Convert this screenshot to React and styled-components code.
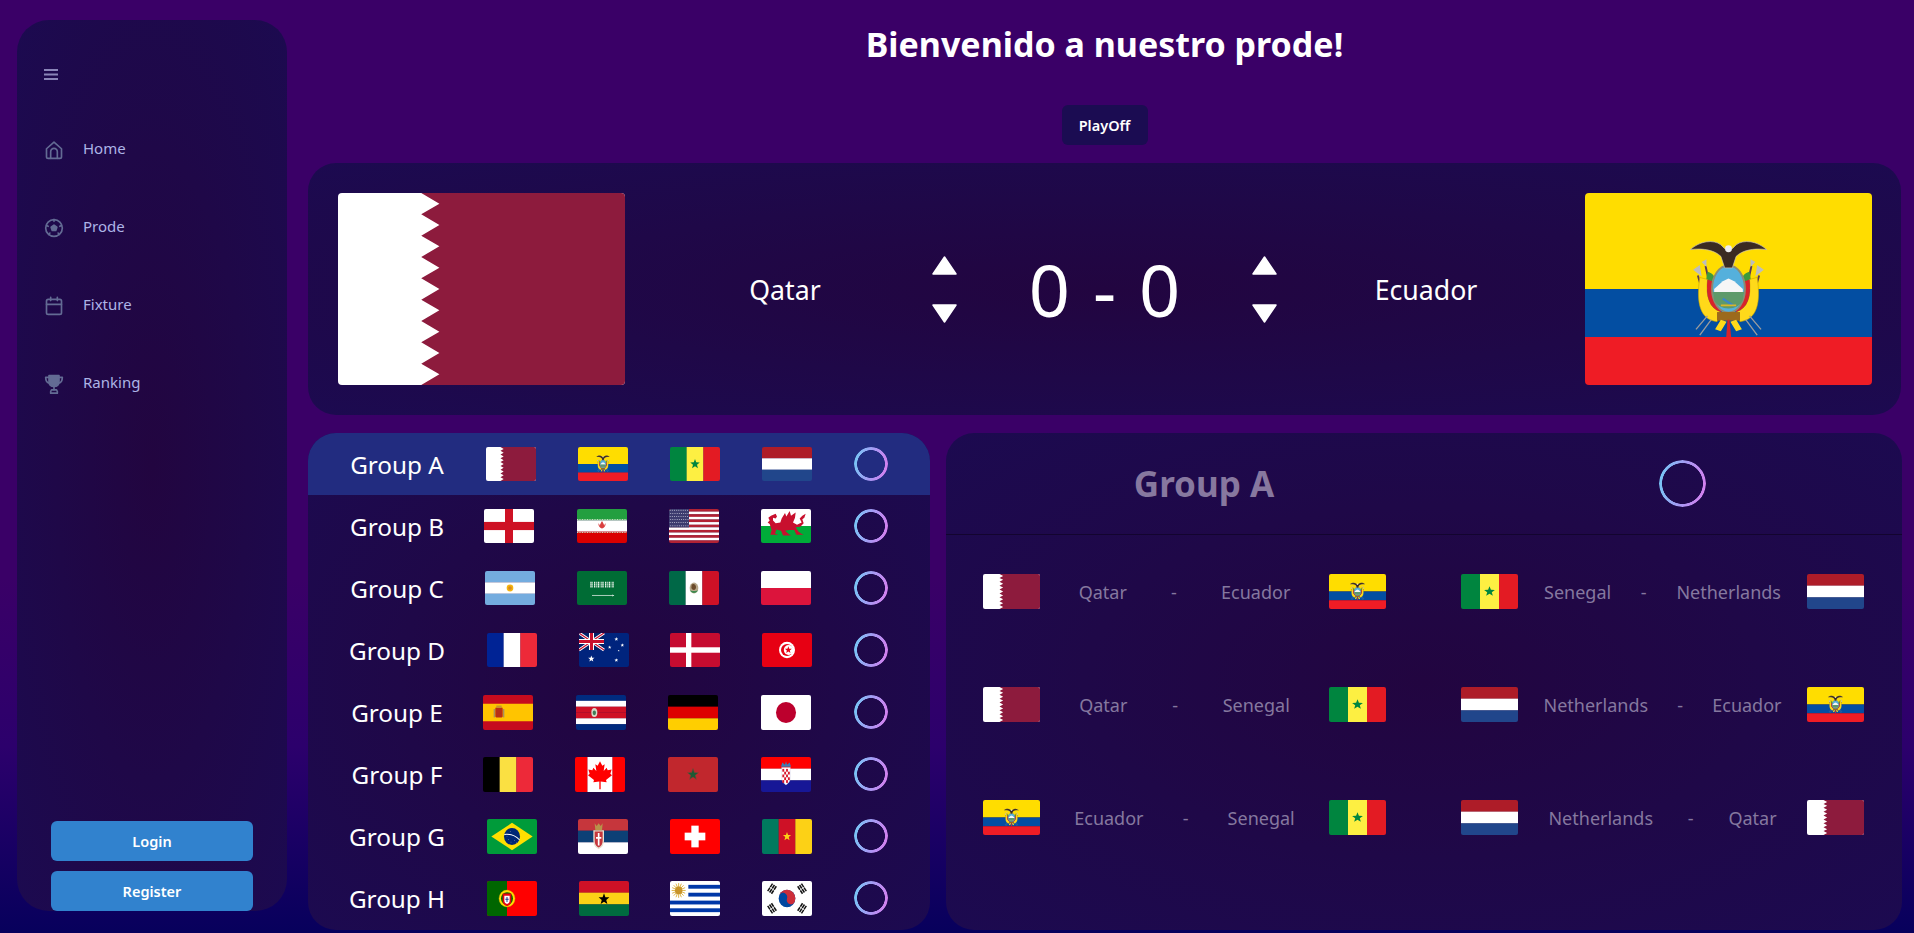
import React from "react";
import styled, { createGlobalStyle } from "styled-components";

const Global = createGlobalStyle`
  html, body { margin: 0; padding: 0; height: 933px; overflow: hidden; }
  body {
    font-family: "Noto Sans", "Open Sans", sans-serif;
    color: #fff;
    background: linear-gradient(180deg, #3a0067 0%, #3a0067 62%, #2c006c 80%, #07005c 100%);
  }
  * { box-sizing: border-box; }
`;

const panelBg = `radial-gradient(ellipse at 50% 50%, #220540 0%, #1f0848 50%, #1c0a50 100%)`;

const Page = styled.div`
  display: flex;
  width: 1914px;
  height: 933px;
  padding: 20px 13px 0 17px;
  gap: 21px;
`;
const Sidebar = styled.aside`
  display: flex;
  flex-direction: column;
  flex: 0 0 270px;
  height: 891px;
  border-radius: 32px;
  background: ${panelBg};
  padding-top: 49px;
`;
const MenuButton = styled.svg`
  display: block;
  width: 14px;
  height: 11px;
  margin-left: 27px;
  margin-bottom: 29px;
  color: #8a85b8;
`;
const NavList = styled.nav`
  display: flex;
  flex-direction: column;
`;
const NavItem = styled.a`
  display: flex;
  align-items: center;
  gap: 19px;
  height: 78px;
  padding-left: 27px;
  font-size: 15px;
  color: #adb4e6;
`;
const NavIcon = styled.svg`
  width: 20px;
  height: 20px;
  margin-top: 4px;
  color: #636b94;
  flex: none;
`;
const AuthBox = styled.div`
  display: flex;
  flex-direction: column;
  gap: 10px;
  margin-top: auto;
  padding: 0 34px;
`;
const AuthButton = styled.button`
  height: 40px;
  border: 0;
  border-radius: 6px;
  background: #3182ce;
  color: #fff;
  font: 600 14.5px "Noto Sans", sans-serif;
`;
const Main = styled.main`
  display: flex;
  flex-direction: column;
  flex: 1;
  min-width: 0;
`;
const Title = styled.h1`
  margin: 0;
  height: 48px;
  text-align: center;
  font-size: 34px;
  line-height: 48px;
  font-weight: 700;
`;
const PlayOff = styled.button`
  align-self: center;
  width: 86px;
  height: 40px;
  margin-top: 37px;
  margin-bottom: 18px;
  border: 0;
  border-radius: 6px;
  background: #1b0c52;
  color: #fff;
  font: 600 14.5px "Noto Sans", sans-serif;
`;
const MatchPanel = styled.section`
  display: grid;
  grid-template-columns: 287px 307px 25px 295px 25px 308px 287px;
  align-items: center;
  height: 252px;
  padding: 0 30px;
  border-radius: 28px;
  background: ${panelBg};
  margin-bottom: 18px;
`;
const BigName = styled.div`
  text-align: center;
  font-size: 26.7px;
  font-weight: 400;
  padding: ${p => (p.$right ? "0 10px 0 0" : "0 0 0 13px")};
`;
const Stepper = styled.div`
  display: flex;
  flex-direction: column;
  gap: 29px;
`;
const Arrow = styled.svg`
  display: block;
  width: 25px;
  height: 19px;
  fill: #fff;
`;
const Score = styled.div`
  display: flex;
  justify-content: center;
  align-items: center;
  font-size: 72px;
  line-height: 1;
  font-weight: 400;
  gap: 23px;
`;
const Lower = styled.div`
  display: flex;
  gap: 16px;
`;
const Groups = styled.section`
  flex: 0 0 622px;
  height: 497px;
  border-radius: 28px;
  overflow: hidden;
  background: ${panelBg};
`;
const GroupRow = styled.div`
  display: flex;
  align-items: center;
  height: 62px;
  background: ${p => (p.$active ? "#222c80" : "transparent")};
`;
const GroupName = styled.div`
  flex: 0 0 175px;
  padding: 1px 0 0 3px;
  text-align: center;
  font-size: 24.3px;
`;
const FlagSlot = styled.div`
  flex: 0 0 92px;
  padding-left: ${p => p.$offset}px;
`;
const FlagSvg = styled.svg`
  display: block;
  width: ${p => p.$w}px;
  height: ${p => p.$h}px;
  border-radius: ${p => p.$r}px;
  flex: none;
`;
const Ring = styled.div`
  flex: none;
  width: ${p => p.$size}px;
  height: ${p => p.$size}px;
  margin-left: ${p => p.$ml || 0}px;
  border-radius: 50%;
  background: linear-gradient(100deg, #70cdf6, #a69af4 50%, #dc7cee);
  -webkit-mask: radial-gradient(farthest-side, transparent calc(100% - 3.4px), #000 calc(100% - 2.8px));
  mask: radial-gradient(farthest-side, transparent calc(100% - 3.4px), #000 calc(100% - 2.8px));
`;
const Detail = styled.section`
  flex: 1;
  height: 497px;
  border-radius: 28px;
  background: ${panelBg};
`;
const DetailHead = styled.header`
  display: grid;
  grid-template-columns: 516px 440px;
  align-items: center;
  justify-items: center;
  height: 102px;
  border-bottom: 1px solid #13042f;
`;
const DetailName = styled.div`
  font-size: 35px;
  font-weight: 700;
  color: #87789f;
`;
const MatchGrid = styled.div`
  display: grid;
  grid-template-columns: 403px 403px;
  column-gap: 75px;
  row-gap: 78px;
  padding: 39px 0 0 37px;
`;
const MatchRow = styled.div`
  display: flex;
  align-items: center;
`;
const Teams = styled.div`
  display: flex;
  flex: 1;
  align-items: center;
  font-size: 18px;
  color: #85789f;
  &::before, &::after { content: ""; flex: 7 0 0; }
`;
const Dash = styled.span`
  flex: 16 0 auto;
  text-align: center;
`;

/* ---------- flag art (viewBox 150 x 100) ---------- */
const Stripes = ({ c, v }) => c.map((col, i) =>
  v
    ? <rect key={i} x={(150 / c.length) * i} y="0" width={150 / c.length + .5} height="100" fill={col} />
    : <rect key={i} x="0" y={(100 / c.length) * i} width="150" height={100 / c.length + .5} fill={col} />
);
const star = (cx, cy, r, fill, stroke) => {
  const pts = [];
  for (let i = 0; i < 10; i++) {
    const a = -Math.PI / 2 + (i * Math.PI) / 5;
    const rr = i % 2 ? r * 0.42 : r;
    pts.push(`${(cx + rr * Math.cos(a)).toFixed(2)},${(cy + rr * Math.sin(a)).toFixed(2)}`);
  }
  return <polygon points={pts.join(" ")} fill={fill} stroke={stroke} />;
};
const qatarPts = () => {
  let s = "150,0 150,100 43.5,100";
  for (let i = 8; i >= 0; i--) {
    s += ` 53,${(i + .5) * 100 / 9} 43.5,${i * 100 / 9}`;
  }
  return s;
};
const EcuadorArms = () => (
  <g>
    <path d="M59 43 L61 50 M91 43 L89 50 M63 38 L65 47 M87 38 L85 47" stroke="#5a3a55" strokeWidth="1" />
    <path d="M56.5 40 l3.5 -2.5 1 6z M93.5 40 l-3.5 -2.5 -1 6z M61 36 l2.5 -1.5 0 4z M89 36 l-2.5 -1.5 0 4z" fill="#bdbdbd" />
    <path d="M64 41 C69 42 69 48 68 52 L63 47Z M86 41 C81 42 81 48 82 52 L87 47Z" fill="#3f9a3a" />
    <path d="M60 44 C58 57 60 66 69 67 L71 62 C65 60 63 54 64 45Z M90 44 C92 57 90 66 81 67 L79 62 C85 60 87 54 86 45Z" fill="#ffd91a" stroke="#c9a600" strokeWidth=".3" />
    <path d="M64 45 C63 54 65 60 71 62 L72 59 C68 56 66 52 66.5 46Z M86 45 C87 54 85 60 79 62 L78 59 C82 56 84 52 83.5 46Z" fill="#d8232a" />
    <path d="M66.5 46 C66 52 68 56 72 59 L72 55 L68 46Z M83.5 46 C84 52 82 56 78 59 L78 55 L82 46Z" fill="#1d4e9a" />
    <ellipse cx="75" cy="50" rx="8.6" ry="12.3" fill="#55b0dc" stroke="#8c8c72" strokeWidth="1" />
    <path d="M67.5 50 L72 46 L75 44.5 L78 46 L82.5 50 L82.5 52 L67.5 52Z" fill="#f6f6f6" />
    <path d="M66.8 51.5 L83.2 51.5 L82.4 56 C80 61.5 70 61.5 67.6 56Z" fill="#5e9a6a" />
    <path d="M72 55 L78 59" stroke="#3a86c8" strokeWidth="1.2" />
    <path d="M71 58.5 L79 58.5" stroke="#d9b52a" strokeWidth=".9" />
    <path d="M55 29.5 C60 25 67 24 71 27 L73 29 L77 29 L79 27 C83 24 90 25 95 29.5 C88 28.5 82 30 79 33 L77 39 L73 39 L71 33 C68 30 62 28.5 55 29.5Z" fill="#3a2a22" stroke="#cfc8b8" strokeWidth=".35" />
    <circle cx="75" cy="29" r="1.8" fill="#eee" />
    <rect x="69" y="62" width="12" height="4.5" fill="#9c6a1c" />
    <path d="M64 64 L58 71 M86 64 L92 71 M66 66 L60 74 M84 66 L90 74" stroke="#9c9c9c" strokeWidth=".7" />
    <path d="M71 66 L68 71 L71 72 L74 67Z M79 66 L82 71 L79 72 L76 67Z" fill="#ffd91a" />
    <path d="M74.5 66 L73.8 75 L76.4 75 L75.5 66Z" fill="#d8232a" />
  </g>
);
const unionJack = (
  <g>
    <rect width="75" height="50" fill="#012169" />
    <path d="M0 0L75 50M75 0L0 50" stroke="#fff" strokeWidth="9" />
    <path d="M0 0L75 50M75 0L0 50" stroke="#c8102e" strokeWidth="3.5" />
    <path d="M37.5 0V50M0 25H75" stroke="#fff" strokeWidth="15" />
    <path d="M37.5 0V50M0 25H75" stroke="#c8102e" strokeWidth="9" />
  </g>
);
const FLAGS = {
  qatar: <><rect width="150" height="100" fill="#fff" /><polygon points={qatarPts()} fill="#8d1b3d" /></>,
  ecuador: <><rect width="150" height="50" fill="#ffdd00" /><rect y="50" width="150" height="25" fill="#034ea2" /><rect y="75" width="150" height="25" fill="#ef1c25" /><EcuadorArms /></>,
  senegal: <><Stripes v c={["#00853f", "#fdef42", "#e31b23"]} />{star(75, 50, 15, "#00853f")}</>,
  netherlands: <Stripes c={["#ae1c28", "#fff", "#21468b"]} />,
  england: <><rect width="150" height="100" fill="#fff" /><rect x="63" width="24" height="100" fill="#ce1124" /><rect y="38" width="150" height="24" fill="#ce1124" /></>,
  iran: <>
    <Stripes c={["#239f40", "#fff", "#da0000"]} />
    <path d="M0 31H150M0 69H150" stroke="#c5dcc0" strokeWidth="3" strokeDasharray="3 2" />
    <path d="M64 42c0 10 6 15 11 15s11-5 11-15c-2 2-4 4-4 8-1-6-4-9-7-15-3 6-6 9-7 15 0-4-2-6-4-8z" fill="#da4040" />
  </>,
  usa: <>
    <Stripes c={["#b22234", "#fff", "#b22234", "#fff", "#b22234", "#fff", "#b22234", "#fff", "#b22234", "#fff", "#b22234", "#fff", "#b22234"]} />
    <rect width="60" height="54" fill="#3c3b6e" />
    {Array.from({ length: 54 }, (_, i) => <circle key={i} cx={3.5 + (i % 9) * 6.5 + (Math.floor(i / 9) % 2) * 1.5} cy={4 + Math.floor(i / 9) * 9} r="1.5" fill="#c9c9dd" />)}
  </>,
  wales: <>
    <rect width="150" height="50" fill="#fff" /><rect y="50" width="150" height="50" fill="#00ab39" />
    <path d="M22 26 L30 20 L44 14 L48 22 L44 28 L36 26 L36 34 L44 42 L58 40 L62 28 L72 12 L76 22 L86 6 L90 20 L104 10 L102 26 L96 40 L108 46 L122 40 L116 28 L124 20 L134 14 L130 26 L124 30 L128 42 L118 52 L104 54 L112 66 L120 72 L128 76 L106 76 L100 62 L84 62 L72 64 L84 74 L90 78 L66 78 L60 64 L46 60 L42 72 L52 76 L28 76 L32 62 L26 44 L20 40 L26 34Z" fill="#c8102e" />
  </>,
  argentina: <><Stripes c={["#74acdf", "#fff", "#74acdf"]} /><circle cx="75" cy="50" r="10" fill="#f6b40e" /><circle cx="75" cy="50" r="5.5" fill="#d98a1f" /></>,
  saudi: <>
    <rect width="150" height="100" fill="#006c35" />
    <path d="M40 34H110M40 40H110M40 46H110" stroke="#e8f2ea" strokeWidth="5" strokeDasharray="4 2 2 3" />
    <path d="M45 72H106" stroke="#fff" strokeWidth="2" /><path d="M106 69l6 3-6 3z" fill="#fff" />
  </>,
  mexico: <>
    <Stripes v c={["#006847", "#fff", "#ce1126"]} />
    <ellipse cx="75" cy="50" rx="13" ry="16" fill="#b7a78a" />
    <path d="M68 40 C75 34 84 42 80 52 C76 58 70 56 67 50Z" fill="#6b4a2a" />
    <path d="M62 56 C68 68 82 68 88 56 C84 60 66 60 62 56Z" fill="#3f8a50" />
  </>,
  poland: <Stripes c={["#fff", "#dc143c"]} />,
  france: <Stripes v c={["#002395", "#fff", "#ed2939"]} />,
  australia: <>
    <rect width="150" height="100" fill="#00247d" />{unionJack}
    {star(37, 76, 10, "#fff")}{star(112, 80, 6, "#fff")}{star(112, 18, 6, "#fff")}{star(92, 42, 5.5, "#fff")}{star(130, 36, 5.5, "#fff")}{star(119, 52, 3, "#fff")}
  </>,
  denmark: <><rect width="150" height="100" fill="#c60c30" /><rect x="48" width="16" height="100" fill="#fff" /><rect y="42" width="150" height="16" fill="#fff" /></>,
  tunisia: <>
    <rect width="150" height="100" fill="#e70013" /><circle cx="75" cy="50" r="24" fill="#fff" />
    <circle cx="75" cy="50" r="18" fill="#e70013" /><circle cx="80" cy="50" r="14.5" fill="#fff" />
    {star(79, 50, 11, "#e70013")}
  </>,
  spain: <>
    <rect width="150" height="100" fill="#c60b1e" /><rect y="25" width="150" height="50" fill="#ffc400" />
    <rect x="37" y="36" width="22" height="28" rx="3" fill="#ad1519" opacity=".85" />
    <rect x="32" y="40" width="4" height="24" fill="#a8935e" /><rect x="60" y="40" width="4" height="24" fill="#a8935e" />
    <rect x="40" y="30" width="16" height="7" fill="#c8962a" />
  </>,
  costarica: <>
    <Stripes c={["#002b7f", "#fff", "#ce1126", "#ce1126", "#fff", "#002b7f"]} />
    <ellipse cx="55" cy="50" rx="9" ry="13" fill="#d8d8c8" /><ellipse cx="55" cy="51" rx="5" ry="7" fill="#3f7c56" />
  </>,
  germany: <Stripes c={["#000", "#dd0000", "#ffce00"]} />,
  japan: <><rect width="150" height="100" fill="#fff" /><circle cx="75" cy="50" r="30" fill="#bc002d" /></>,
  belgium: <Stripes v c={["#000", "#fae042", "#ed2939"]} />,
  canada: <>
    <Stripes v c={["#ff0000", "#fff", "#fff", "#ff0000"]} />
    <path d="M75 12 L82 25 L89 21 L86 40 L95 31 L98 38 L110 36 L106 48 L111 52 L93 66 L95 72 L77 70 L77 92 L73 92 L73 70 L55 72 L57 66 L39 52 L44 48 L40 36 L52 38 L55 31 L64 40 L61 21 L68 25Z" fill="#ff0000" />
  </>,
  morocco: <><rect width="150" height="100" fill="#c1272d" />{star(75, 50, 17, "none", "#176a3a")}{star(75, 50, 15, "#1c5a34")}</>,
  croatia: <>
    <Stripes c={["#ff0000", "#fff", "#171796"]} />
    <path d="M62 30 H88 V58 C88 72 80 76 75 80 C70 76 62 72 62 58Z" fill="#fff" stroke="#c8c8e0" strokeWidth="1" />
    {Array.from({ length: 20 }, (_, i) => (
      (i + Math.floor(i / 4)) % 2 ? null : <rect key={i} x={64 + (i % 4) * 5.6} y={34 + Math.floor(i / 4) * 8} width="5.6" height="8" fill="#d8182e" />
    ))}
    <path d="M60 28 L64 16 L72 22 L75 12 L78 22 L86 16 L90 28Z" fill="#3d7fb6" />
  </>,
  brazil: <>
    <rect width="150" height="100" fill="#009b3a" />
    <polygon points="75,11 137,50 75,89 13,50" fill="#fedf00" />
    <circle cx="75" cy="50" r="24" fill="#002776" />
    <path d="M52 44 C70 42 88 50 98 60" stroke="#fff" strokeWidth="3" fill="none" />
    {[[65, 58], [72, 66], [82, 62], [88, 68], [70, 36], [60, 50]].map(([x, y], i) => <circle key={i} cx={x} cy={y} r="1" fill="#d8d8e8" />)}
  </>,
  serbia: <>
    <Stripes c={["#c6363c", "#0c4076", "#fff"]} />
    <path d="M48 34 H76 V62 C76 76 66 82 62 84 C58 82 48 76 48 62Z" fill="#c6363c" stroke="#e8e0d0" strokeWidth="4" />
    <path d="M50 12 L56 20 L62 12 L68 20 L74 12 L72 32 L52 32Z" fill="#b8924a" />
    <path d="M62 40V76M54 54H70" stroke="#fff" strokeWidth="5" />
  </>,
  switzerland: <><rect width="150" height="100" fill="#ff0000" /><rect x="64" y="19" width="22" height="62" fill="#fff" /><rect x="44" y="39" width="62" height="22" fill="#fff" /></>,
  cameroon: <><Stripes v c={["#007a5e", "#ce1126", "#fcd116"]} />{star(75, 50, 13, "#fcd116")}</>,
  portugal: <>
    <rect width="150" height="100" fill="#ff0000" /><rect width="60" height="100" fill="#006600" />
    <circle cx="60" cy="50" r="24" fill="#ffe000" stroke="#e0b000" /><circle cx="60" cy="50" r="18" fill="#006600" />
    <path d="M47 36 H73 V56 C73 66 66 70 60 72 C54 70 47 66 47 56Z" fill="#e8000f" />
    <path d="M52 42 H68 V56 C68 62 64 65 60 66 C56 65 52 62 52 56Z" fill="#fff" />
    <path d="M60 46V60M55 52H65" stroke="#1a3a8f" strokeWidth="3" />
  </>,
  ghana: <><Stripes c={["#ce1126", "#fcd116", "#006b3f"]} />{star(75, 52, 17, "#000")}</>,
  uruguay: <>
    <rect width="150" height="100" fill="#fff" />
    {[11, 33.5, 56, 78].map((y, i) => <rect key={i} x={i < 2 ? 55 : 0} y={y} width="150" height="11" fill="#0038a8" />)}
    {Array.from({ length: 16 }, (_, i) => <line key={i} x1="26" y1="27" x2={26 + 21 * Math.cos(i * Math.PI / 8)} y2={27 + 21 * Math.sin(i * Math.PI / 8)} stroke="#d9a520" strokeWidth="2.4" />)}
    <circle cx="26" cy="27" r="11" fill="#c8942a" />
  </>,
  korea: <>
    <rect width="150" height="100" fill="#fff" />
    <circle cx="75" cy="50" r="25" fill="#0047a0" />
    <path d="M50 50 A25 25 0 0 1 100 50 A12.5 12.5 0 0 1 75 50 A12.5 12.5 0 0 0 50 50Z" fill="#cd2e3a" transform="rotate(20 75 50)" />
    {[[30, 22, -56], [120, 22, 56], [30, 78, 56], [120, 78, -56]].map(([x, y, r], i) => (
      <g key={i} transform={`translate(${x} ${y}) rotate(${r})`} fill="#111">
        <rect x="-13" y="-9" width="26" height="4.5" /><rect x="-13" y="-2.2" width="26" height="4.5" /><rect x="-13" y="4.6" width="26" height="4.5" />
        <rect x="-1" y="-10" width="2" height="21" fill="#fff" />
      </g>
    ))}
  </>,
};
const Flag = ({ name, w = 50, h = 34, r = 2 }) => (
  <FlagSvg viewBox="0 0 150 100" preserveAspectRatio="none" $w={w} $h={h} $r={r}>{FLAGS[name]}</FlagSvg>
);

const GROUPS = [
  ["Group A", 34, [["qatar", 3], ["ecuador", 3], ["senegal", 3], ["netherlands", 3]]],
  ["Group B", 34, [["england", 1], ["iran", 2], ["usa", 2], ["wales", 2]]],
  ["Group C", 34, [["argentina", 2], ["saudi", 2], ["mexico", 2], ["poland", 2]]],
  ["Group D", 34, [["france", 4], ["australia", 4], ["denmark", 3], ["tunisia", 3]]],
  ["Group E", 35, [["spain", 0], ["costarica", 1], ["germany", 1], ["japan", 2]]],
  ["Group F", 35, [["belgium", 0], ["canada", 0], ["morocco", 1], ["croatia", 2]]],
  ["Group G", 35, [["brazil", 4], ["serbia", 3], ["switzerland", 3], ["cameroon", 3]]],
  ["Group H", 35, [["portugal", 4], ["ghana", 4], ["uruguay", 3], ["korea", 3]]],
];
const MATCHES = [
  ["qatar", "Qatar", "Ecuador", "ecuador"],
  ["senegal", "Senegal", "Netherlands", "netherlands"],
  ["qatar", "Qatar", "Senegal", "senegal"],
  ["netherlands", "Netherlands", "Ecuador", "ecuador"],
  ["ecuador", "Ecuador", "Senegal", "senegal"],
  ["netherlands", "Netherlands", "Qatar", "qatar"],
];

const iconProps = { viewBox: "0 0 24 24", fill: "none", stroke: "currentColor", strokeWidth: 2, strokeLinecap: "round", strokeLinejoin: "round" };
const NAV = [
  ["Home", <><path d="M3 10.5 12 2.5l9 8V20a2 2 0 0 1-2 2H5a2 2 0 0 1-2-2z" /><path d="M8 22v-8a4 4 0 0 1 8 0v8" /></>],
  ["Prode", <><circle cx="12" cy="12" r="10" /><polygon points="12,8.5 15.4,11 14.1,15 9.9,15 8.6,11" fill="currentColor" /><path d="M12 2v2M3 9l2 1M21 9l-2 1M6 20l1-2M18 20l-1-2" /></>],
  ["Fixture", <><rect x="3" y="4" width="18" height="18" rx="2" /><path d="M8 1.5v4M16 1.5v4M3 10h18" /></>],
  ["Ranking", <><path d="M6 2h12v7c0 4-2.5 6-6 6s-6-2-6-6z" fill="currentColor" /><path d="M6 4H2c0 4 1.5 7 5 7M18 4h4c0 4-1.5 7-5 7M12 15v4" /><path d="M8 23v-2l1-2h6l1 2v2z" /></>],
];

const Triangle = ({ down }) => (
  <Arrow viewBox="0 0 25 19">
    <polygon points={down ? "1,1 24,1 12.5,18" : "1,18 24,18 12.5,1"} stroke="#fff" strokeWidth="1.5" strokeLinejoin="round" />
  </Arrow>
);
const ScoreStepper = () => (
  <Stepper><Triangle /><Triangle down /></Stepper>
);

export default function App() {
  return (
    <>
      <Global />
      <Page>
        <Sidebar>
          <MenuButton viewBox="0 0 14 11">
            <path d="M0 1h14M0 5.5h14M0 10h14" stroke="currentColor" strokeWidth="1.9" />
          </MenuButton>
          <NavList>
            {NAV.map(([label, art]) => (
              <NavItem key={label}>
                <NavIcon {...iconProps}>{art}</NavIcon>
                {label}
              </NavItem>
            ))}
          </NavList>
          <AuthBox>
            <AuthButton>Login</AuthButton>
            <AuthButton>Register</AuthButton>
          </AuthBox>
        </Sidebar>
        <Main>
          <Title>Bienvenido a nuestro prode!</Title>
          <PlayOff>PlayOff</PlayOff>
          <MatchPanel>
            <Flag name="qatar" w={287} h={192} r={4} />
            <BigName>Qatar</BigName>
            <ScoreStepper />
            <Score><span>0</span><span>-</span><span>0</span></Score>
            <ScoreStepper />
            <BigName $right>Ecuador</BigName>
            <Flag name="ecuador" w={287} h={192} r={4} />
          </MatchPanel>
          <Lower>
            <Groups>
              {GROUPS.map(([name, h, flags], i) => (
                <GroupRow key={name} $active={i === 0}>
                  <GroupName>{name}</GroupName>
                  {flags.map(([f, off]) => (
                    <FlagSlot key={f} $offset={off}><Flag name={f} h={h} /></FlagSlot>
                  ))}
                  <Ring $size={34} $ml={3} />
                </GroupRow>
              ))}
            </Groups>
            <Detail>
              <DetailHead>
                <DetailName>Group A</DetailName>
                <Ring $size={47} />
              </DetailHead>
              <MatchGrid>
                {MATCHES.map(([a, an, bn, b], i) => (
                  <MatchRow key={i}>
                    <Flag name={a} w={57} h={35} />
                    <Teams><span>{an}</span><Dash>-</Dash><span>{bn}</span></Teams>
                    <Flag name={b} w={57} h={35} />
                  </MatchRow>
                ))}
              </MatchGrid>
            </Detail>
          </Lower>
        </Main>
      </Page>
    </>
  );
}
